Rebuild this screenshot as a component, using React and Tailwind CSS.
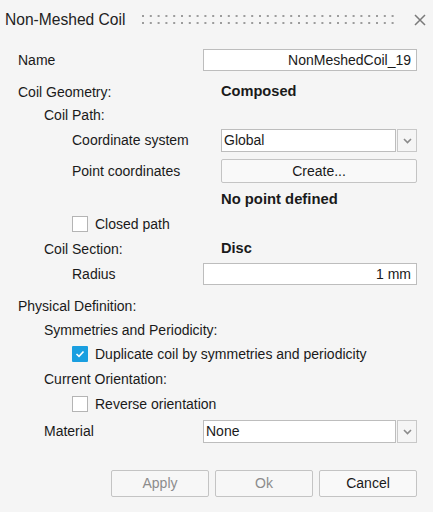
import React from "react";

function Chevron() {
  return (
    <svg width="9" height="6" viewBox="0 0 9 6" className="block">
      <path d="M1 1 L4.5 4.5 L8 1" fill="none" stroke="#8a8a8a" strokeWidth="1.6" />
    </svg>
  );
}

function Check({ checked }) {
  if (checked) {
    return (
      <div className="w-4 h-4 bg-[#1a9fe0] flex items-center justify-center rounded-[1px]">
        <svg width="10" height="8" viewBox="0 0 10 8">
          <path d="M1.5 4 L4 6.3 L8.5 1.5" fill="none" stroke="#fff" strokeWidth="1.6" />
        </svg>
      </div>
    );
  }
  return <div className="w-4 h-4 bg-white border border-[#b4b4b4]" />;
}

function Select({ value }) {
  return (
    <div className="flex h-full">
      <div className="flex-1 bg-white border border-[#bdbdbd] flex items-center pl-[2px]">{value}</div>
      <div className="w-[20px] ml-px border border-[#c8c8c8] flex items-center justify-center">
        <Chevron />
      </div>
    </div>
  );
}

export default function App() {
  const dots = Array.from({ length: 33 });
  return (
    <div
      className="w-[433px] h-[512px] bg-[#f5f5f5] text-[#1a1a1a] text-[14px] overflow-hidden"
      style={{ fontFamily: '"Liberation Sans", Arial, sans-serif' }}
    >
      {/* title bar */}
      <div className="h-[40px] flex items-center pl-[5px] pr-[7px]">
        <span className="text-[15.6px] text-[#222]">Non-Meshed Coil</span>
        <svg width="258" height="12" className="ml-[17px]">
          {dots.map((_, i) => (
            <g key={i} fill="#9c9c9c">
              <rect x={i * 7.8} y={1} width="2" height="2" />
              <rect x={i * 7.8} y={8} width="2" height="2" />
            </g>
          ))}
        </svg>
        <svg width="12" height="12" viewBox="0 0 12 12" className="ml-auto">
          <path d="M1 1 L11 11 M11 1 L1 11" stroke="#7a7a7a" strokeWidth="1.5" />
        </svg>
      </div>

      <div className="flex items-center h-[22px] mt-[9px]">
        <span className="pl-[18px] w-[203px]">Name</span>
        <div className="w-[214px] h-full bg-white border border-[#bdbdbd] flex items-center justify-end pr-[5px]">
          NonMeshedCoil_19
        </div>
      </div>

      <div className="flex items-center h-[20px] mt-[11px]">
        <span className="pl-[18px] w-[221px]">Coil Geometry:</span>
        <span className="font-bold text-[14.6px]">Composed</span>
      </div>

      <div className="flex items-center h-[20px] mt-[3px] pl-[44px]">Coil Path:</div>

      <div className="flex items-center h-[23px] mt-[4px]">
        <span className="pl-[72px] w-[221px]">Coordinate system</span>
        <div className="w-[196px] h-full">
          <Select value="Global" />
        </div>
      </div>

      <div className="flex items-center h-[24px] mt-[7px]">
        <span className="pl-[72px] w-[221px]">Point coordinates</span>
        <div className="w-[196px] h-full bg-[#f9f9f9] border border-[#c4c4c4] rounded-[2px] flex items-center justify-center">
          Create...
        </div>
      </div>

      <div className="flex items-center h-[20px] mt-[6px] pl-[221px] font-bold text-[14.8px]">No point defined</div>

      <div className="flex items-center h-[16px] mt-[7px] pl-[72px] gap-[7px]">
        <Check checked={false} />
        <span>Closed path</span>
      </div>

      <div className="flex items-center h-[20px] mt-[7px]">
        <span className="pl-[44px] w-[221px]">Coil Section:</span>
        <span className="font-bold text-[14.6px]">Disc</span>
      </div>

      <div className="flex items-center h-[22px] mt-[4px]">
        <span className="pl-[72px] w-[203px]">Radius</span>
        <div className="w-[214px] h-full bg-white border border-[#bdbdbd] flex items-center justify-end pr-[5px]">
          1 mm
        </div>
      </div>

      <div className="flex items-center h-[20px] mt-[11px] pl-[18px]">Physical Definition:</div>
      <div className="flex items-center h-[20px] mt-[4px] pl-[44px]">Symmetries and Periodicity:</div>

      <div className="flex items-center h-[16px] mt-[6px] pl-[72px] gap-[7px]">
        <Check checked={true} />
        <span>Duplicate coil by symmetries and periodicity</span>
      </div>

      <div className="flex items-center h-[20px] mt-[7px] pl-[44px]">Current Orientation:</div>

      <div className="flex items-center h-[16px] mt-[7px] pl-[72px] gap-[7px]">
        <Check checked={false} />
        <span>Reverse orientation</span>
      </div>

      <div className="flex items-center h-[23px] mt-[8px]">
        <span className="pl-[44px] w-[203px]">Material</span>
        <div className="w-[214px] h-full">
          <Select value="None" />
        </div>
      </div>

      <div className="flex h-[27px] mt-[27px] pl-[111px] gap-[6px]">
        <div className="w-[98px] h-full border border-[#c4c4c4] rounded-[2px] bg-[#f7f7f7] flex items-center justify-center text-[#8c8c8c]">
          Apply
        </div>
        <div className="w-[98px] h-full border border-[#c4c4c4] rounded-[2px] bg-[#f7f7f7] flex items-center justify-center text-[#8c8c8c]">
          Ok
        </div>
        <div className="w-[98px] h-full border border-[#c4c4c4] rounded-[2px] bg-[#f9f9f9] flex items-center justify-center">
          Cancel
        </div>
      </div>
    </div>
  );
}
